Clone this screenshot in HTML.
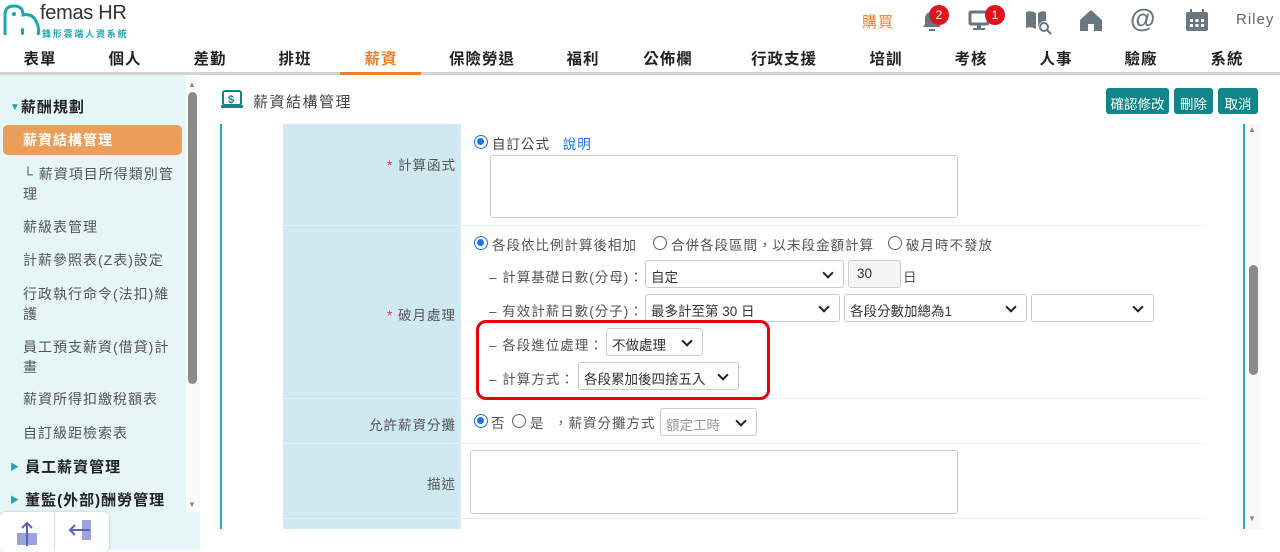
<!DOCTYPE html>
<html><head><meta charset="utf-8"><style>
*{margin:0;padding:0;box-sizing:border-box}
body{width:1280px;height:550px;overflow:hidden;background:#fff;font-family:"Liberation Sans","Noto Sans CJK TC",sans-serif;color:#333;position:relative}
.a{position:absolute;white-space:nowrap}
.nav{top:47px;font-size:15.5px;font-weight:bold;color:#222;transform:translateX(-50%);letter-spacing:1px}
.side{font-size:14px;color:#555;left:23px;letter-spacing:1px;line-height:20px}
.lab{font-size:13.5px;color:#555;letter-spacing:1px}
.rl{position:absolute;white-space:nowrap;font-size:13.5px;color:#555;letter-spacing:1px;right:824px;text-align:right}
.sel{position:absolute;border:1px solid #ccc;border-radius:3px;background:#fff;height:28px;font-size:13.5px;color:#333;padding:5px 0 0 5px}
.sel:after{content:"";position:absolute;right:11px;top:8px;width:6px;height:6px;border-right:2px solid #222;border-bottom:2px solid #222;transform:rotate(45deg)}
.rad{position:absolute;width:14px;height:14px;border-radius:50%;border:1.5px solid #666;background:#fff}
.rad.on{border:1.5px solid #1a73e8}
.rad.on:after{content:"";position:absolute;left:2px;top:2px;width:7px;height:7px;border-radius:50%;background:#1a73e8}
.ta{position:absolute;border:1px solid #ccc;border-radius:3px;background:#fff}
.btn{position:absolute;top:88px;height:26px;background:#12858a;color:#fff;font-size:13.5px;border-radius:3px;padding:5px 0 0;text-align:center}
.badge{position:absolute;width:20px;height:20px;border-radius:50%;background:#e0121b;color:#fff;font-size:12px;text-align:center;line-height:20px}
</style></head><body>
<!-- logo -->
<svg class="a" style="left:2px;top:3px" width="42" height="34" viewBox="0 0 42 34"><path d="M3 32 V12 Q3 3 12 3 Q21 3 21 12 Q30 10 34 18 Q38 26 36 32" fill="none" stroke="#1aa8b0" stroke-width="3"/><circle cx="12" cy="11" r="2" fill="#1aa8b0"/><rect x="19" y="25" width="3" height="7" rx="1.5" fill="#1aa8b0"/></svg>
<div class="a" style="left:40px;top:2px;font-size:20px;color:#333;letter-spacing:-0.3px">femas HR</div>
<div class="a" style="left:42px;top:27px;font-size:9px;color:#1aa8b0;letter-spacing:1.8px;font-weight:bold">鋒形雲端人資系統</div>
<!-- top right -->
<div class="a" style="left:862px;top:11px;font-size:15px;color:#f07d2a;letter-spacing:1px">購買</div>
<svg class="a" style="left:920px;top:8px" width="24" height="26" viewBox="0 0 24 26"><path d="M3 19 L5 16 V11 Q5 4 12 4 Q19 4 19 11 V16 L21 19 Z" fill="#6b7780"/><rect x="9" y="21" width="6" height="2" fill="#6b7780"/></svg>
<div class="badge" style="left:929px;top:5px">2</div>
<svg class="a" style="left:968px;top:9px" width="30" height="24" viewBox="0 0 30 24"><rect x="2" y="3" width="18" height="12" rx="1" fill="none" stroke="#6b7780" stroke-width="3"/><rect x="9" y="15" width="4" height="4" fill="#6b7780"/><rect x="5" y="19" width="12" height="2" fill="#6b7780"/></svg>
<div class="badge" style="left:985px;top:5px">1</div>
<svg class="a" style="left:1024px;top:9px" width="30" height="26" viewBox="0 0 30 26"><path d="M2 3 Q7 1 12 4 V20 Q7 17 2 19 Z M14 4 Q19 1 22 3 V12 Q15 12 14 19 Z" fill="#6b7780"/><circle cx="20" cy="18" r="4" fill="none" stroke="#6b7780" stroke-width="2"/><path d="M23 21 L27 25" stroke="#6b7780" stroke-width="2"/></svg>
<svg class="a" style="left:1078px;top:9px" width="26" height="24" viewBox="0 0 26 24"><path d="M2 11 L13 1 L24 11 V22 H16 V15 H10 V22 H2 Z" fill="#6b7780"/></svg>
<div class="a" style="left:1130px;top:3px;font-size:26px;color:#6b7780;font-weight:bold">@</div>
<svg class="a" style="left:1184px;top:7px" width="26" height="26" viewBox="0 0 26 26"><rect x="2" y="5" width="22" height="19" rx="2" fill="#6b7780"/><rect x="6" y="2" width="2" height="5" fill="#6b7780"/><rect x="18" y="2" width="2" height="5" fill="#6b7780"/><g fill="#fff"><rect x="6" y="12" width="3" height="3"/><rect x="11.5" y="12" width="3" height="3"/><rect x="17" y="12" width="3" height="3"/><rect x="6" y="17" width="3" height="3"/><rect x="11.5" y="17" width="3" height="3"/><rect x="17" y="17" width="3" height="3"/></g></svg>
<div class="a" style="left:1236px;top:11px;font-size:15px;color:#666;letter-spacing:1px">Riley</div>
<!-- nav -->
<div class="a nav" style="left:40px">表單</div>
<div class="a nav" style="left:125px">個人</div>
<div class="a nav" style="left:210px">差勤</div>
<div class="a nav" style="left:295px">排班</div>
<div class="a nav" style="left:381px;color:#f07d2a">薪資</div>
<div class="a nav" style="left:482px">保險勞退</div>
<div class="a nav" style="left:583px">福利</div>
<div class="a nav" style="left:668px">公佈欄</div>
<div class="a nav" style="left:784px">行政支援</div>
<div class="a nav" style="left:886px">培訓</div>
<div class="a nav" style="left:971px">考核</div>
<div class="a nav" style="left:1056px">人事</div>
<div class="a nav" style="left:1141px">驗廠</div>
<div class="a nav" style="left:1227px">系統</div>
<div class="a" style="left:0;top:72px;width:1280px;height:3px;background:#d4d4d4"></div>
<div class="a" style="left:340px;top:72px;width:81px;height:3px;background:#f07d2a"></div>
<!-- sidebar -->
<div class="a" style="left:0;top:75px;width:200px;height:475px;background:#e6f5f6"></div>
<div class="a" style="left:186px;top:75px;width:14px;height:437px;background:#fafafa"></div>
<div class="a" style="left:188px;top:80px;font-size:8px;color:#888">▲</div>
<div class="a" style="left:188px;top:500px;font-size:8px;color:#888">▼</div>
<div class="a" style="left:188px;top:92px;width:9px;height:292px;border-radius:5px;background:#8a8a8a"></div>
<div class="a" style="left:10px;top:96px;font-size:15px;font-weight:bold;color:#222;letter-spacing:1px"><span style="color:#1aa8b0;font-size:10px;vertical-align:2px">▼</span>薪酬規劃</div>
<div class="a" style="left:3px;top:125px;width:179px;height:30px;border-radius:5px;background:#ec9e58"></div>
<div class="a side" style="top:130px;color:#fff;font-weight:bold">薪資結構管理</div>
<div class="a side" style="top:164px">└ 薪資項目所得類別管<br>理</div>
<div class="a side" style="top:217px">薪級表管理</div>
<div class="a side" style="top:250px">計薪參照表(Z表)設定</div>
<div class="a side" style="top:284px">行政執行命令(法扣)維<br>護</div>
<div class="a side" style="top:337px">員工預支薪資(借貸)計<br>畫</div>
<div class="a side" style="top:389px">薪資所得扣繳稅額表</div>
<div class="a side" style="top:423px">自訂級距檢索表</div>
<div class="a" style="left:10px;top:456px;font-size:15px;font-weight:bold;color:#222;letter-spacing:1px"><span style="color:#1aa8b0;font-size:9px;vertical-align:2px">▶</span> 員工薪資管理</div>
<div class="a" style="left:10px;top:489px;font-size:15px;font-weight:bold;color:#222;letter-spacing:1px"><span style="color:#1aa8b0;font-size:9px;vertical-align:2px">▶</span> 董監(外部)酬勞管理</div>
<div class="a" style="left:0;top:512px;width:109px;height:40px;background:#fff;border-radius:5px;box-shadow:0 0 2px #bbb"></div>
<div class="a" style="left:54px;top:512px;width:1px;height:38px;background:#ddd"></div>
<svg class="a" style="left:14px;top:520px" width="26" height="28" viewBox="0 0 26 28"><rect x="3" y="13" width="20" height="12" fill="#9da3dc"/><path d="M13 26 V3 M8 8 L13 3 L18 8" stroke="#5a62c0" stroke-width="2" fill="none"/></svg>
<svg class="a" style="left:68px;top:518px" width="26" height="26" viewBox="0 0 26 26"><rect x="14" y="2" width="9" height="20" fill="#9da3dc"/><path d="M2 12 H22 M7 7 L2 12 L7 17" stroke="#5a62c0" stroke-width="2" fill="none"/></svg>
<!-- title -->
<svg class="a" style="left:220px;top:90px" width="24" height="20" viewBox="0 0 24 20"><rect x="3" y="1" width="18" height="14" rx="2" fill="none" stroke="#12858a" stroke-width="2"/><rect x="1" y="15" width="22" height="3" rx="1" fill="#12858a"/><text x="8" y="13" font-size="11" font-weight="bold" fill="#12858a" font-family="Liberation Sans">$</text></svg>
<div class="a" style="left:253px;top:91px;font-size:15px;color:#444;letter-spacing:1.5px">薪資結構管理</div>
<div class="btn" style="left:1106px;width:63px">確認修改</div>
<div class="btn" style="left:1174px;width:39px">刪除</div>
<div class="btn" style="left:1218px;width:40px">取消</div>
<!-- frame -->
<div class="a" style="left:220px;top:124px;width:2px;height:405px;background:#1ab1bb"></div>
<div class="a" style="left:1243px;top:124px;width:2px;height:405px;background:#1ab1bb"></div>
<div class="a" style="left:1247px;top:124px;width:14px;height:405px;background:#f8f8f8"></div>
<div class="a" style="left:1248px;top:125px;font-size:8px;color:#888">▲</div>
<div class="a" style="left:1248px;top:514px;font-size:8px;color:#888">▼</div>
<div class="a" style="left:1249px;top:265px;width:9px;height:110px;border-radius:5px;background:#8a8a8a"></div>
<!-- label col -->
<div class="a" style="left:283px;top:124px;width:178px;height:405px;background:#d0e8f1"></div>
<div class="a" style="left:283px;top:225px;width:920px;height:1px;background:#e4f0f5"></div>
<div class="a" style="left:283px;top:398px;width:920px;height:1px;background:#e4f0f5"></div>
<div class="a" style="left:283px;top:443px;width:920px;height:1px;background:#e4f0f5"></div>
<div class="a" style="left:283px;top:518px;width:920px;height:1px;background:#e4f0f5"></div>
<div class="rl" style="top:154px"><span style="color:#e33">*</span> 計算函式</div>
<div class="rl" style="top:304px"><span style="color:#e33">*</span> 破月處理</div>
<div class="rl" style="top:414px">允許薪資分攤</div>
<div class="rl" style="top:473px">描述</div>
<!-- row1 -->
<div class="rad on" style="left:474px;top:135px"></div>
<div class="a lab" style="left:492px;top:133px;color:#444">自訂公式 <span style="color:#1a73e8;margin-left:8px">說明</span></div>
<div class="ta" style="left:490px;top:155px;width:468px;height:63px"></div>
<!-- row2 -->
<div class="rad on" style="left:474px;top:236px"></div>
<div class="a lab" style="left:492px;top:234px">各段依比例計算後相加</div>
<div class="rad" style="left:653px;top:236px"></div>
<div class="a lab" style="left:671px;top:234px">合併各段區間，以末段金額計算</div>
<div class="rad" style="left:888px;top:236px"></div>
<div class="a lab" style="left:906px;top:234px">破月時不發放</div>
<div class="a lab" style="left:489px;top:266px">– 計算基礎日數(分母)：</div>
<div class="sel" style="left:645px;top:260px;width:199px">自定</div>
<div class="a" style="left:848px;top:260px;width:53px;height:28px;border:1px solid #ccc;border-radius:3px;background:#f4f4f4;font-size:13.5px;padding:5px 0 0 8px">30</div>
<div class="a lab" style="left:903px;top:266px">日</div>
<div class="a lab" style="left:489px;top:300px">– 有效計薪日數(分子)：</div>
<div class="sel" style="left:645px;top:294px;width:195px">最多計至第 30 日</div>
<div class="sel" style="left:844px;top:294px;width:183px">各段分數加總為1</div>
<div class="sel" style="left:1031px;top:294px;width:123px"></div>
<div class="a lab" style="left:489px;top:334px">– 各段進位處理：</div>
<div class="sel" style="left:606px;top:328px;width:97px">不做處理</div>
<div class="a lab" style="left:489px;top:368px">– 計算方式：</div>
<div class="sel" style="left:578px;top:362px;width:161px">各段累加後四捨五入</div>
<div class="a" style="left:476px;top:320px;width:294px;height:80px;border:3px solid #e8000b;border-radius:10px"></div>
<!-- row3 -->
<div class="rad on" style="left:474px;top:414px"></div>
<div class="a lab" style="left:491px;top:412px">否</div>
<div class="rad" style="left:512px;top:414px"></div>
<div class="a lab" style="left:530px;top:412px">是 &nbsp;，薪資分攤方式</div>
<div class="sel" style="left:660px;top:408px;width:97px;color:#999">額定工時</div>
<!-- row4 -->
<div class="ta" style="left:470px;top:450px;width:488px;height:64px"></div>
</body></html>
